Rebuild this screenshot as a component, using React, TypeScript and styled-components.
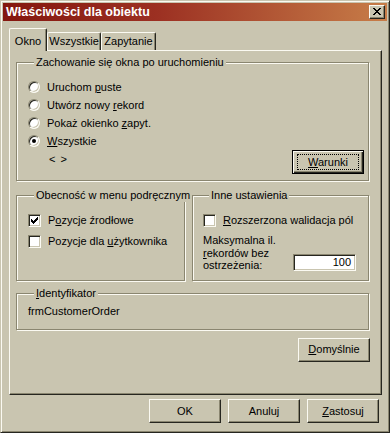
import React from "react";
import styled, { createGlobalStyle } from "styled-components";

const BG = "#c9c5b0";
const LIGHT = "#fbfaf2";
const SHADOW = "#8a8670";
const DARK = "#26261f";

const GlobalStyle = createGlobalStyle`
  html, body {
    margin: 0;
    padding: 0;
    background: ${BG};
  }
  body {
    font-family: "Liberation Sans", Arial, sans-serif;
    font-size: 11px;
    color: #000;
  }
  * {
    box-sizing: border-box;
  }
`;

const Window = styled.div`
  width: 390px;
  height: 433px;
  background: ${BG};
  border: 1px solid;
  border-color: ${BG} ${DARK} ${DARK} ${BG};
  box-shadow: inset 1px 1px 0 ${LIGHT}, inset -1px -1px 0 ${SHADOW};
  padding: 2px;
  display: flex;
  flex-direction: column;
`;

const TitleBar = styled.div`
  height: 18px;
  display: flex;
  align-items: center;
  justify-content: space-between;
  padding: 0 2px 0 3px;
  background: linear-gradient(to right, #84170f 0%, #9c3022 40%, #c77d48 100%);
`;

const Title = styled.span`
  color: #fff;
  font-weight: bold;
  font-size: 12.5px;
  line-height: 16px;
`;

const CloseButton = styled.div`
  width: 16px;
  height: 14px;
  background: ${BG};
  border: 1px solid;
  border-color: ${LIGHT} ${DARK} ${DARK} ${LIGHT};
  box-shadow: inset -1px -1px 0 ${SHADOW};
  display: flex;
  align-items: center;
  justify-content: center;
  padding: 0 1px 1px 0;
`;

const Body = styled.div`
  display: flex;
  flex-direction: column;
  padding: 7px 0 0 6px;
`;

const TabRow = styled.div`
  display: flex;
  align-items: flex-end;
  height: 23px;
  margin-bottom: -1px;
  position: relative;
  z-index: 1;
`;

const Tab = styled.div<{ $active?: boolean; $w: number }>`
  width: ${(p) => p.$w}px;
  height: ${(p) => (p.$active ? 23 : 18)}px;
  margin-bottom: ${(p) => (p.$active ? 0 : 1)}px;
  background: ${BG};
  border: 1px solid;
  border-bottom: none;
  border-color: ${LIGHT} ${DARK} ${DARK} ${LIGHT};
  border-radius: 2px 2px 0 0;
  box-shadow: inset -1px 0 0 ${SHADOW};
  display: flex;
  align-items: flex-end;
  justify-content: center;
  padding-bottom: ${(p) => (p.$active ? 3 : 2)}px;
  line-height: 13px;
`;

const Panel = styled.div`
  width: 373px;
  height: 345px;
  border: 1px solid;
  border-color: ${LIGHT} ${DARK} ${DARK} ${LIGHT};
  box-shadow: inset -1px -1px 0 ${SHADOW};
  padding: 5px 0 0 6px;
`;

const Content = styled.div`
  width: 354px;
  display: flex;
  flex-direction: column;
`;

const Group = styled.fieldset<{ $pad: string; $top?: number }>`
  margin: ${(p) => p.$top ?? 0}px 0 0 0;
  min-width: 0;
  width: 353px;
  padding: ${(p) => p.$pad};
  border: 1px solid ${SHADOW};
  box-shadow: inset 1px 1px 0 ${LIGHT}, 1px 1px 0 ${LIGHT};
`;

const Legend = styled.legend`
  margin-left: 6px;
  padding: 0 2px;
  background: ${BG};
  line-height: 13px;
  white-space: nowrap;
`;

const GroupRow = styled.div`
  display: grid;
  grid-template-columns: 169px 177px;
  column-gap: 7px;
  margin-top: 8px;

  & > fieldset {
    width: auto;
  }
`;

const Behaviour = styled.div`
  display: flex;
  justify-content: space-between;
  min-height: 96px;
`;

const OptionList = styled.div`
  display: flex;
  flex-direction: column;
`;

const OptionRow = styled.div<{ $h?: number }>`
  display: flex;
  align-items: center;
  gap: 7px;
  height: ${(p) => p.$h ?? 18}px;
  line-height: 13px;
  white-space: nowrap;
`;

const Arrows = styled.div`
  height: 18px;
  display: flex;
  align-items: center;
  padding-left: 21px;
  word-spacing: 2px;
`;

const Radio = styled.span<{ $checked?: boolean }>`
  width: 12px;
  height: 12px;
  flex: none;
  border-radius: 50%;
  border: 1px solid;
  border-color: ${SHADOW} ${LIGHT} ${LIGHT} ${SHADOW};
  box-shadow: inset 1px 1px 0 ${DARK}, inset -1px -1px 0 ${BG};
  background: #fff;
  display: flex;
  align-items: center;
  justify-content: center;

  &::after {
    content: "";
    width: 4px;
    height: 4px;
    border-radius: 50%;
    background: ${(p) => (p.$checked ? "#000" : "transparent")};
  }
`;

const Check = styled.span`
  width: 13px;
  height: 13px;
  flex: none;
  border: 1px solid;
  border-color: ${SHADOW} ${LIGHT} ${LIGHT} ${SHADOW};
  box-shadow: inset 1px 1px 0 ${DARK}, inset -1px -1px 0 ${BG};
  background: #fff;
  display: flex;
  align-items: center;
  justify-content: center;
`;

const Button = styled.div<{ $default?: boolean }>`
  width: 72px;
  height: 24px;
  flex: none;
  position: relative;
  background: ${BG};
  display: flex;
  align-items: center;
  justify-content: center;
  line-height: 13px;
  border: 1px solid;
  border-color: ${(p) =>
    p.$default ? "#000" : `${LIGHT} ${DARK} ${DARK} ${LIGHT}`};
  box-shadow: ${(p) =>
    p.$default
      ? `inset 1px 1px 0 ${LIGHT}, inset -1px -1px 0 ${DARK}, inset -2px -2px 0 ${SHADOW}`
      : `inset -1px -1px 0 ${SHADOW}`};

  ${(p) =>
    p.$default &&
    `
    &::after {
      content: "";
      position: absolute;
      inset: 3px 4px 3px 4px;
      border: 1px dotted #000;
    }
  `}
`;

const SideButton = styled(Button)`
  align-self: flex-end;
`;

const OtherSettings = styled.div`
  display: flex;
  flex-direction: column;
  gap: 5px;
`;

const LimitRow = styled.div`
  display: flex;
  justify-content: space-between;
  align-items: flex-end;
`;

const LimitLabel = styled.div`
  line-height: 12.5px;
`;

const NumberField = styled.div`
  width: 63px;
  height: 17px;
  margin-bottom: 1px;
  background: #fff;
  border: 1px solid;
  border-color: ${SHADOW} ${LIGHT} ${LIGHT} ${SHADOW};
  box-shadow: inset 1px 1px 0 ${DARK}, inset -1px -1px 0 ${BG};
  text-align: right;
  padding: 1px 4px 0 0;
  line-height: 13px;
`;

const IdText = styled.div`
  line-height: 13px;
`;

const Footer = styled.div`
  display: flex;
  justify-content: flex-end;
  gap: 7px;
  margin-top: 4px;
  padding-right: 8px;
`;

const CheckMark = () => (
  <svg width="7" height="7" viewBox="0 0 7 7" shapeRendering="crispEdges">
    <path
      fill="#000"
      d="M6 0h1v1h-1z M5 1h2v1h-2z M0 2h1v1h-1z M4 2h3v1h-3z M0 3h2v1h-2z M3 3h3v1h-3z M0 4h5v1h-5z M1 5h3v1h-3z M2 6h1v1h-1z"
    />
  </svg>
);

const CloseGlyph = () => (
  <svg width="8" height="7" viewBox="0 0 8 7" shapeRendering="crispEdges">
    <path
      fill="#000"
      d="M0 0h2v1H0z M6 0h2v1H6z M1 1h2v1H1z M5 1h2v1H5z M2 2h4v1H2z M3 3h2v1H3z M2 4h4v1H2z M1 5h2v1H1z M5 5h2v1H5z M0 6h2v1H0z M6 6h2v1H6z"
    />
  </svg>
);

const App = () => {
  return (
    <>
      <GlobalStyle />
      <Window>
        <TitleBar>
          <Title>Właściwości dla obiektu</Title>
          <CloseButton>
            <CloseGlyph />
          </CloseButton>
        </TitleBar>
        <Body>
          <TabRow>
            <Tab $active $w={38}>Okno</Tab>
            <Tab $w={54}>Wszystkie</Tab>
            <Tab $w={55}>Zapytanie</Tab>
          </TabRow>
          <Panel>
            <Content>
              <Group $pad="9px 4px 6px 11px">
                <Legend>Zachowanie się okna po uruchomieniu</Legend>
                <Behaviour>
                  <OptionList>
                    <OptionRow>
                      <Radio />
                      <span>
                        Uruchom <u>p</u>uste
                      </span>
                    </OptionRow>
                    <OptionRow>
                      <Radio />
                      <span>
                        Utwórz nowy <u>r</u>ekord
                      </span>
                    </OptionRow>
                    <OptionRow>
                      <Radio />
                      <span>
                        Pokaż okienko <u>z</u>apyt.
                      </span>
                    </OptionRow>
                    <OptionRow>
                      <Radio $checked />
                      <span>
                        <u>W</u>szystkie
                      </span>
                    </OptionRow>
                    <Arrows>&lt; &gt;</Arrows>
                  </OptionList>
                  <SideButton $default>
                    <span>
                      <u>W</u>arunki
                    </span>
                  </SideButton>
                </Behaviour>
              </Group>

              <GroupRow>
                <Group $pad="10px 4px 8px 11px">
                  <Legend>Obecność w menu podręcznym</Legend>
                  <OptionList>
                    <OptionRow $h={17}>
                      <Check>
                        <CheckMark />
                      </Check>
                      <span>
                        P<u>o</u>zycje źrodłowe
                      </span>
                    </OptionRow>
                    <OptionRow $h={17} style={{ marginTop: 4 }}>
                      <Check />
                      <span>
                        Pozycje dla <u>u</u>żytkownika
                      </span>
                    </OptionRow>
                  </OptionList>
                </Group>
                <Group $pad="10px 12px 8px 10px">
                  <Legend>Inne ustawienia</Legend>
                  <OtherSettings>
                    <OptionRow $h={17}>
                      <Check />
                      <span>
                        <u>R</u>ozszerzona walidacja pól
                      </span>
                    </OptionRow>
                    <LimitRow>
                      <LimitLabel>
                        Maksymalna il.
                        <br />
                        <u>r</u>ekordów bez
                        <br />
                        ostrzeżenia:
                      </LimitLabel>
                      <NumberField>100</NumberField>
                    </LimitRow>
                  </OtherSettings>
                </Group>
              </GroupRow>

              <Group $pad="5px 4px 11px 11px" $top={6}>
                <Legend>
                  <u>I</u>dentyfikator
                </Legend>
                <IdText>frmCustomerOrder</IdText>
              </Group>

              <SideButton style={{ marginTop: 8 }}>
                <span>
                  <u>D</u>omyślnie
                </span>
              </SideButton>
            </Content>
          </Panel>
          <Footer>
            <Button>OK</Button>
            <Button>Anuluj</Button>
            <Button>
              <span>
                <u>Z</u>astosuj
              </span>
            </Button>
          </Footer>
        </Body>
      </Window>
    </>
  );
};

export default App;
